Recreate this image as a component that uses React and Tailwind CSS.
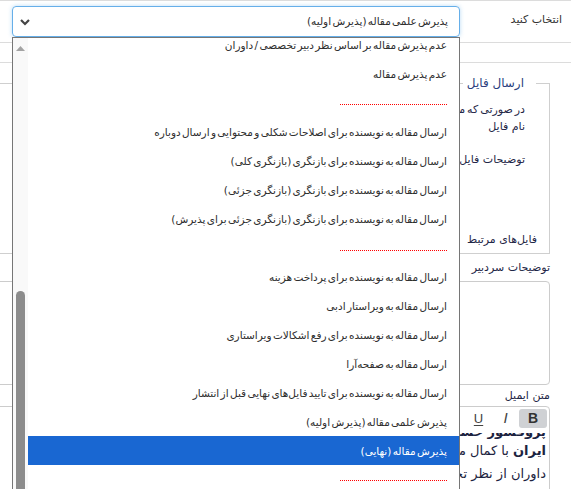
import React from "react";

const items = [
  { t: "عدم پذیرش مقاله بر اساس نظر دبیر تخصصی / داوران" },
  { t: "عدم پذیرش مقاله" },
  { sep: 16 },
  { t: "ارسال مقاله به نویسنده برای اصلاحات شکلی و محتوایی و ارسال دوباره" },
  { t: "ارسال مقاله به نویسنده برای بازنگری (بازنگری کلی)" },
  { t: "ارسال مقاله به نویسنده برای بازنگری (بازنگری جزئی)" },
  { t: "ارسال مقاله به نویسنده برای بازنگری (بازنگری جزئی برای پذیرش)" },
  { sep: 17 },
  { t: "ارسال مقاله به نویسنده برای پرداخت هزینه" },
  { t: "ارسال مقاله به ویراستار ادبی" },
  { t: "ارسال مقاله به نویسنده برای رفع اشکالات ویراستاری" },
  { t: "ارسال مقاله به صفحه‌آرا" },
  { t: "ارسال مقاله به نویسنده برای تایید فایل‌های نهایی قبل از انتشار" },
  { t: "پذیرش علمی مقاله (پذیرش اولیه)" },
  { t: "پذیرش مقاله (نهایی)", sel: true },
  { sep: 15 },
];

const sepPad = { 15: "pt-[15px]", 16: "pt-[16px]", 17: "pt-[17px]" };

function Dots() {
  return (
    <svg width="107" height="1" viewBox="0 0 107 1" shapeRendering="crispEdges" className="block">
      <line x1="0" y1="0.5" x2="107" y2="0.5" stroke="#ff0000" strokeWidth="1" strokeDasharray="1 1" />
    </svg>
  );
}

export default function App() {
  return (
    <div
      dir="rtl"
      className="relative w-[571px] h-[489px] overflow-hidden bg-white text-[#333] font-['DejaVu_Sans',sans-serif] text-[11px]"
    >
      {/* row 1 */}
      <div className="flex items-center h-[43px] border-t border-b border-[#dcdcdc]">
        <div className="w-[111px] pr-[9px] pb-[2px] text-[11px] text-[#333]">انتخاب کنید</div>
        <div className="w-[448px] h-[31px] border border-[#66afe9] rounded-[4px] shadow-[0_0_4px_rgba(102,175,233,0.45)] flex items-center justify-between pr-[11px] pl-[6px]">
          <span className="text-[10.5px] [word-spacing:-2px] text-[#2e2e2e]">پذیرش علمی مقاله (پذیرش اولیه)</span>
          <svg width="12" height="8" viewBox="0 0 12 8" className="mt-[1px]">
            <polyline points="2,2 6,6 10,2" fill="none" stroke="#444" strokeWidth="2.2" />
          </svg>
        </div>
      </div>
      <div className="h-[20px] border-b border-[#dcdcdc]" />

      {/* fieldset */}
      <div className="pr-[21px] pl-0">
        <fieldset className="mt-[12px] -ml-[20px] border border-[#cfcfcf] pb-[5px]">
          <legend className="mr-[13px] pl-[4px] pr-[12px] text-[12px] leading-[16px] text-[#2b3f7d]">ارسال فایل</legend>
          <div className="pr-[24px] pt-[10px] leading-[17px] text-[#1f2747] whitespace-nowrap">
            <div className="[word-spacing:-1.5px]">در صورتی که مایل به ارسال فایل هستید، فایل مورد نظر را انتخاب کنید</div>
            <div>نام فایل</div>
            <div className="mt-[16px]">توضیحات فایل</div>
            <div className="mt-[63px] -mr-[12px]">فایل‌های مرتبط</div>
          </div>
        </fieldset>

        <div className="mt-[5px] leading-[17px] text-[#1f2747]">توضیحات سردبیر</div>
        <div className="mt-[5px] h-[104px] border border-[#cccccc] rounded-[4px] -ml-[20px]" />
        <div className="mt-[2px] leading-[17px] text-[#1f2747]">متن ایمیل</div>
        <div className="mt-[2px] -ml-[20px] border border-[#cccccc] rounded-t-[4px] h-[100px]">
          <div className="flex pt-[2px] pr-[2px] h-[26px]">
            <div className="w-[28px] h-[19px] rounded-[3px] bg-[#cfd1d4] flex items-center justify-center text-[14px] font-bold text-[#333] font-['Liberation_Sans',sans-serif]">B</div>
            <div className="w-[27px] h-[19px] flex items-center justify-center text-[15px] italic text-[#444] font-['Liberation_Sans',sans-serif]">I</div>
            <div className="w-[27px] h-[19px] flex items-center justify-center text-[13px] underline underline-offset-2 text-[#444] font-['Liberation_Sans',sans-serif]">U</div>
          </div>
          <div className="h-[60px] overflow-hidden pr-[3px] text-[13px] text-[#1c2340] whitespace-nowrap">
            <div className="-mt-[9px] leading-[16px] font-bold">پروفسور حسین زاده</div>
            <div className="leading-[22px]"><span className="font-bold">ایران</span> با کمال مسرت به اطلاع می‌رساند</div>
            <div className="leading-[23px]">داوران از نظر تخصصی مقاله شما را بررسی کردند</div>
          </div>
        </div>
      </div>

      {/* open dropdown list */}
      <div className="absolute left-[12px] top-[37px] w-[448px] h-[470px] border border-[#767676] bg-white overflow-hidden flex">
        <div className="flex-1 -mt-[8px] text-[10.5px] [word-spacing:-2px]">
          {items.map((it, i) =>
            it.sep ? (
              <div key={i} className={"h-[29px] pr-[12px] " + sepPad[it.sep]}>
                <Dots />
              </div>
            ) : (
              <div
                key={i}
                className={
                  it.sel
                    ? "h-[29px] flex items-center pr-[12px] pt-[2px] bg-[#1967d2] text-white whitespace-nowrap"
                    : "h-[29px] flex items-center pr-[12px] pt-[2px] text-[#2e2e2e] whitespace-nowrap"
                }
              >
                {it.t}
              </div>
            )
          )}
        </div>
        <div className="w-[15px] bg-[#f9f9f9] flex flex-col items-center">
          <svg width="9" height="5" viewBox="0 0 9 5" className="mt-[8px]">
            <polygon points="0,5 4.5,0 9,5" fill="#a3a3a3" />
          </svg>
          <div className="mt-[240px] w-[9px] flex-1 bg-[#8c8c8c] rounded-t-full" />
        </div>
      </div>
    </div>
  );
}
